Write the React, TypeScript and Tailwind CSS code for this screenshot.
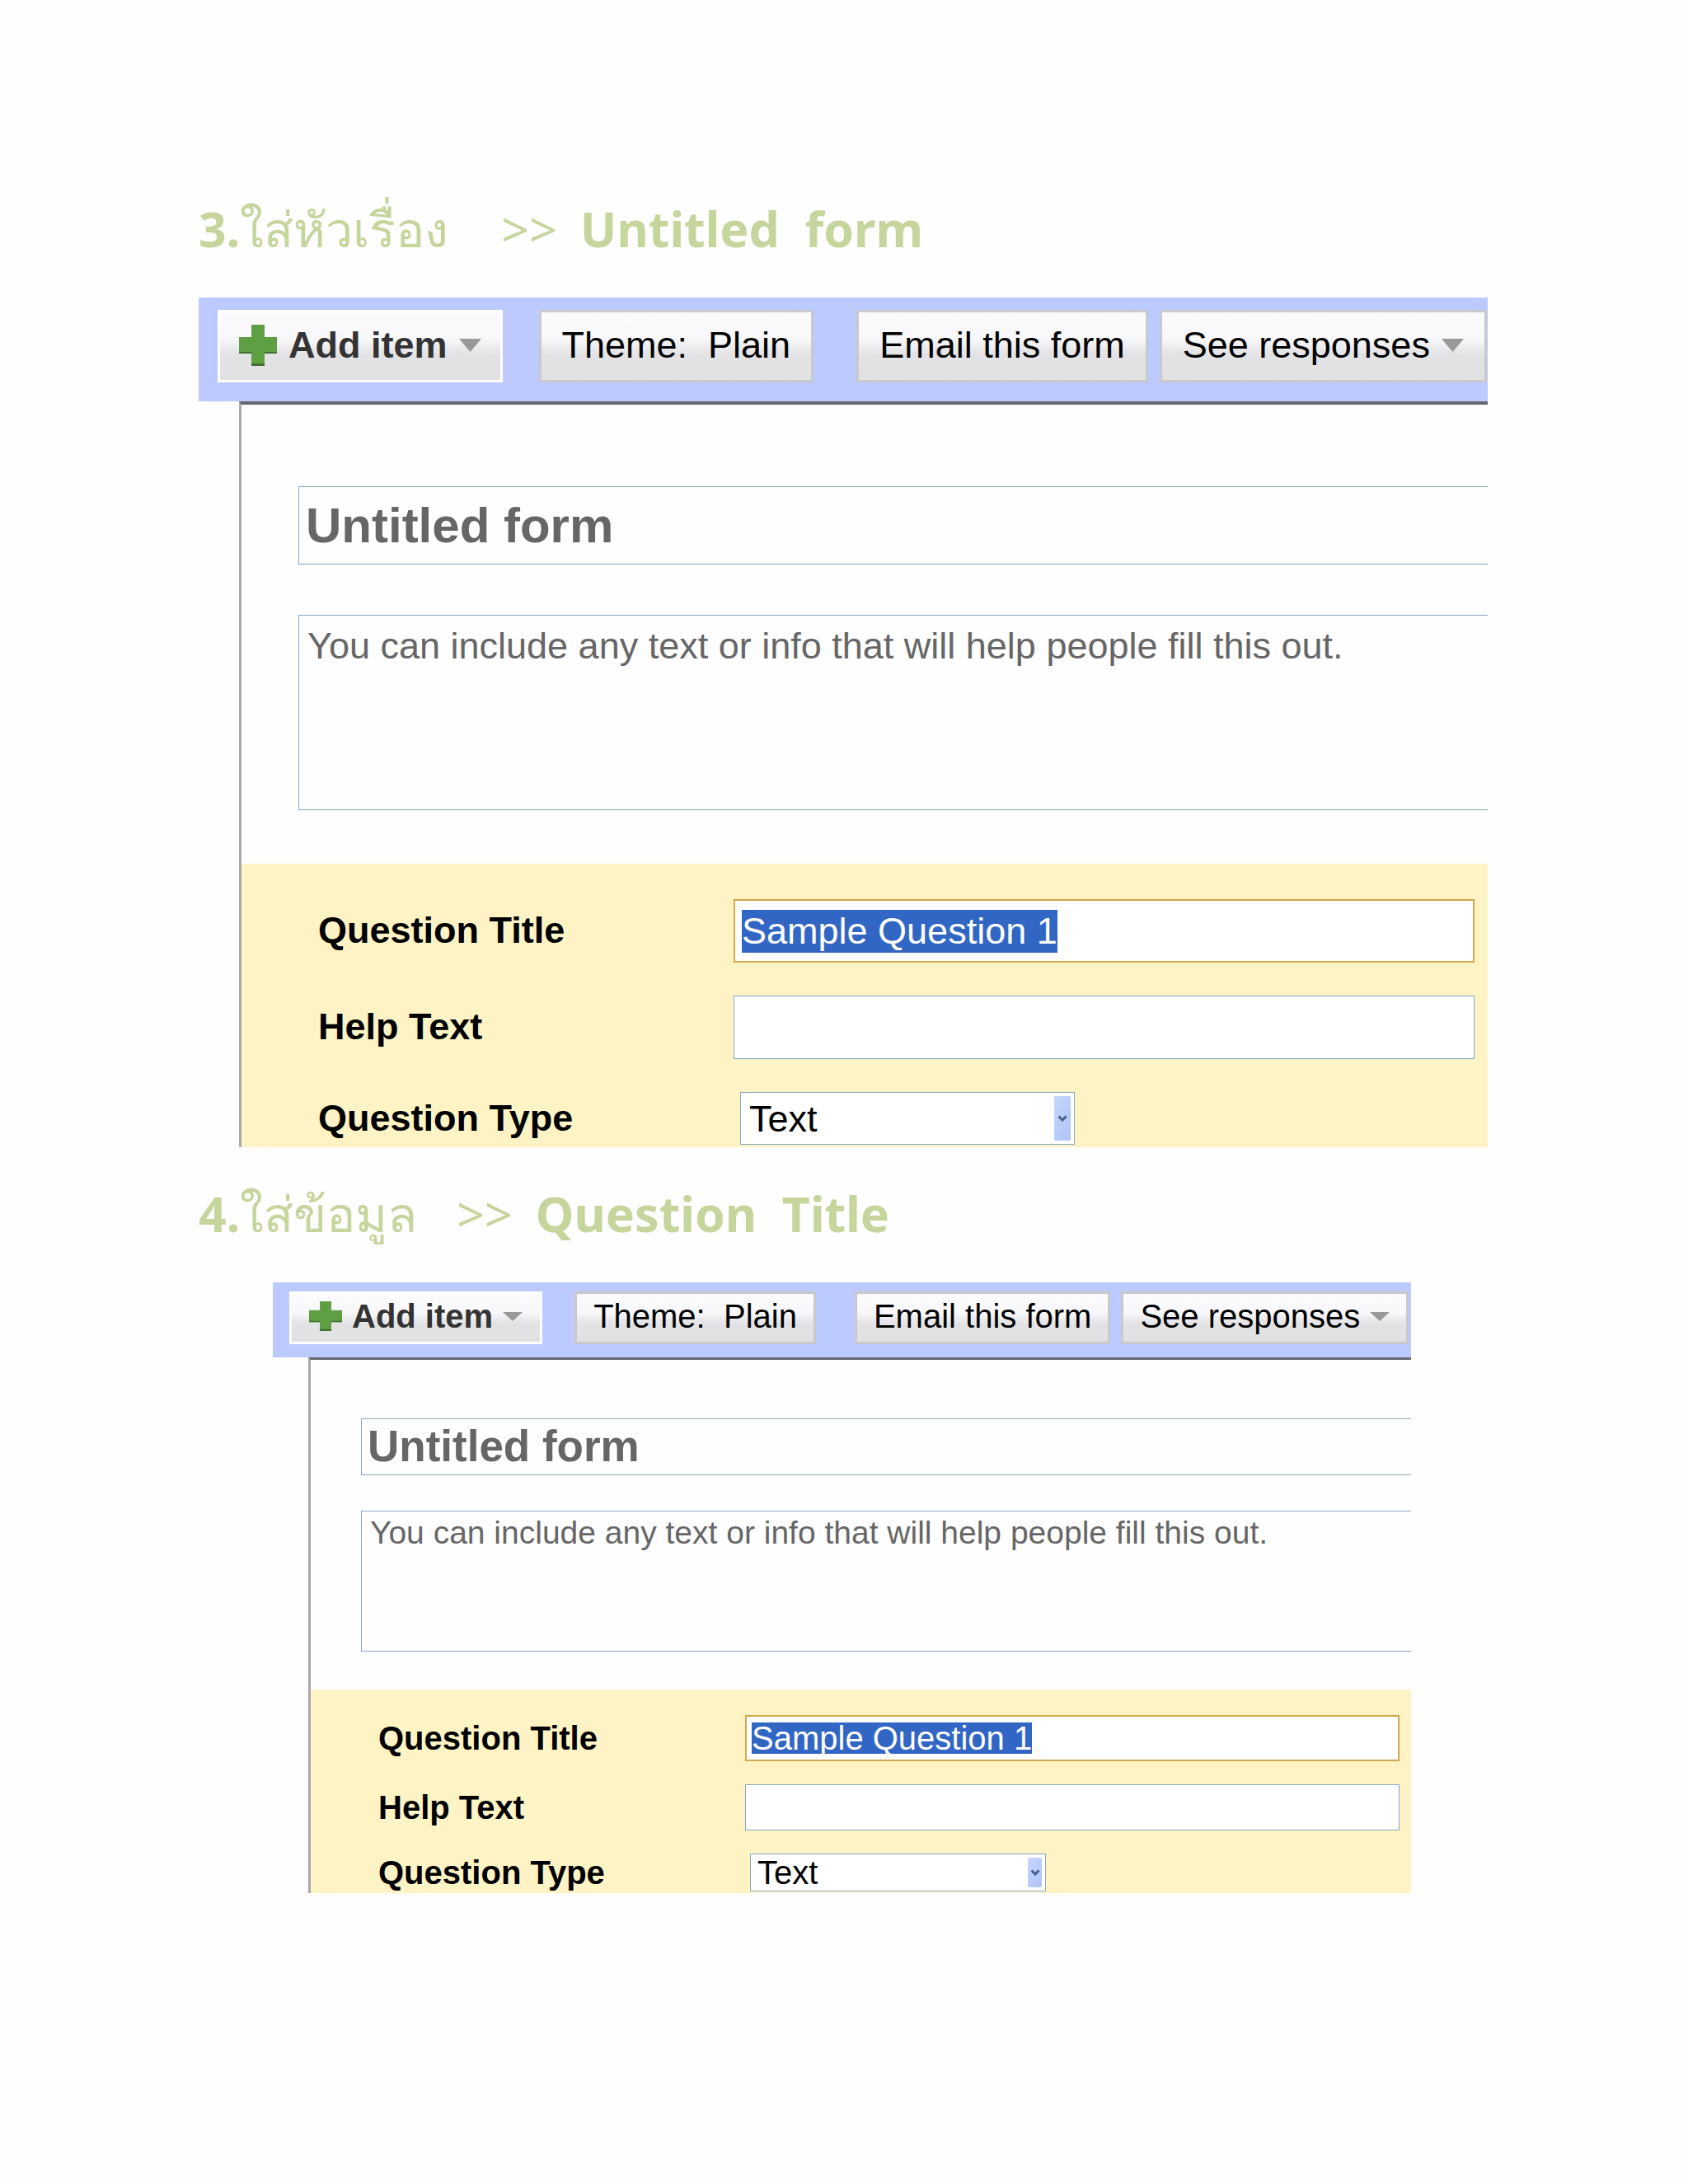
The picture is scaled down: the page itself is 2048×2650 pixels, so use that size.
import { useId } from "react";
import clsx from "clsx";

type Size = "lg" | "sm";

// every measurement that differs between the large and the small form
const S = {
  lg: {
    bar: "h-[126px] pl-[23px] pr-px pt-[15px]",
    btn: "h-[88px] text-[45px] pb-[3px]",
    pad: "px-[25px]",
    addPad: "px-[23px]",
    plus: "w-[46px] h-[50px]",
    caret: "w-[27px] h-4",
    iconGap: "gap-[14px]",
    g1: "ml-[44px]", g2: "ml-[52px]", g3: "ml-[14px]",
    body: "ml-[49px] border-t-4",
    top: "pl-[69px] pt-[99px] pb-[65px] gap-[61px]",
    title: "h-[95px] pl-2 text-[60px]",
    desc: "h-[237px] pl-[10px] pt-[11px] text-[45px] leading-[52px]",
    question: "pl-[93px] pr-4 pt-[43px] pb-[3px] gap-10 text-[45px]",
    label: "w-[504px] pb-[2px]",
    field: "h-[77px]",
    fieldPad: "pl-2",
    sample: "h-[52px]",
    selectBox: "ml-2 w-[406px] h-16",
    select: "pl-[6px]",
    strip: "w-5",
  },
  sm: {
    bar: "h-[91px] pl-[20px] pr-[3px] pt-[11px]",
    btn: "h-16 text-[40px] pb-1",
    pad: "px-5",
    addPad: "px-[21px]",
    plus: "w-10 h-9",
    caret: "w-6 h-[11px]",
    iconGap: "gap-3",
    g1: "ml-[39px]", g2: "ml-[47px]", g3: "ml-[13px]",
    body: "ml-[43px] border-t-3",
    top: "pl-[61px] pt-[71px] pb-[46px] gap-[43px]",
    title: "h-[69px] pl-[7px] pb-[2px] text-[53px]",
    desc: "h-[171px] pl-[10px] pt-1 text-[39px] leading-[44px]",
    question: "pl-[82px] pr-[14px] pt-[31px] pb-[2px] gap-7 text-[40px]",
    label: "w-[445px] pb-px",
    field: "h-14",
    fieldPad: "pl-[6px]",
    sample: "h-[38px]",
    selectBox: "ml-[6px] w-[359px] h-[46px]",
    select: "pl-1",
    strip: "w-[17px]",
  },
};

const face = "bg-[linear-gradient(#fbfbfd_0%,#f8f8fa_40%,#ececee_52%,#e3e3e5_62%,#e1e1e3_100%)]";

function Plus({ className }: { className: string }) {
  return (
    <svg viewBox="0 0 46 50" preserveAspectRatio="none" className={className} aria-hidden="true">
      <path d="M15 0H31V15H46V35H31V50H15V35H0V15H15Z" fill="#5f9f43" />
      <path d="M0 33H15V35H0ZM31 33H46V35H31ZM15 47H31V50H15Z" fill="#3f7032" />
    </svg>
  );
}

function Caret({ className }: { className: string }) {
  return (
    <svg viewBox="0 0 27 16" preserveAspectRatio="none" className={className} aria-hidden="true">
      <path d="M0 0H27L13.500 16Z" fill="#999" />
    </svg>
  );
}

function Toolbar({ size }: { size: Size }) {
  const s = S[size];
  const btn = clsx("flex shrink-0 items-center whitespace-pre border-3 leading-none", face, s.btn);
  const plain = clsx(btn, s.pad, "border-[#c9c9cb] text-black");
  return (
    <div className={clsx("flex items-start bg-[#bccaff]", s.bar)}>
      <button type="button" className={clsx(btn, s.addPad, s.iconGap, "border-white font-bold text-[#333]")}>
        <Plus className={s.plus} />
        Add item
        <Caret className={s.caret} />
      </button>
      <button type="button" className={clsx(plain, s.g1)}>{"Theme:  Plain"}</button>
      <button type="button" className={clsx(plain, s.g2)}>Email this form</button>
      <button type="button" className={clsx(plain, s.g3, s.iconGap)}>
        See responses
        <Caret className={s.caret} />
      </button>
    </div>
  );
}

function FormEditor({ size }: { size: Size }) {
  const id = useId();
  const s = S[size];
  const label = clsx("shrink-0 font-bold leading-none text-black", s.label);
  return (
    <section className="overflow-hidden font-['Liberation_Sans',sans-serif]">
      <Toolbar size={size} />
      <div className={clsx("border-l-3 border-t-[#666870] border-l-[#a9a9ad]", s.body)}>
        <div className={clsx("flex flex-col", s.top)}>
          <input
            aria-label="Form title"
            defaultValue="Untitled form"
            className={clsx("w-full border border-r-0 border-[#8aa7c4] font-bold text-[#666] outline-none", s.title)}
          />
          <textarea
            aria-label="Form description"
            defaultValue="You can include any text or info that will help people fill this out."
            className={clsx("block w-full resize-none overflow-hidden border border-r-0 border-[#8aa7c4] text-[#666] outline-none", s.desc)}
          />
        </div>
        <div className={clsx("flex flex-col bg-[#fdf3c4]", s.question)}>
          <div className="flex items-center">
            <label htmlFor={`${id}-title`} className={label}>Question Title</label>
            <div className={clsx("flex min-w-0 flex-1 items-center border-2 border-[#d0a850] bg-white", s.field, s.fieldPad)}>
              <input
                id={`${id}-title`}
                defaultValue="Sample Question 1"
                className={clsx("field-sizing-content bg-[#3166c4] text-white outline-none", s.sample)}
              />
            </div>
          </div>
          <div className="flex items-center">
            <label htmlFor={`${id}-help`} className={label}>Help Text</label>
            <input
              id={`${id}-help`}
              className={clsx("min-w-0 flex-1 border border-[#8aa7c4] bg-white outline-none", s.field, s.fieldPad)}
            />
          </div>
          <div className="flex items-center">
            <label htmlFor={`${id}-type`} className={label}>Question Type</label>
            <div className={clsx("flex border border-[#8aa7c4] bg-white p-1", s.selectBox)}>
              <select
                id={`${id}-type`}
                className={clsx("-my-1 min-w-0 flex-1 appearance-none leading-none text-black outline-none", s.select)}
              >
                <option>Text</option>
              </select>
              <div className={clsx("flex items-center justify-center rounded-xs bg-linear-to-br from-[#c6d6fd] to-[#aec4f6]", s.strip)}>
                <svg viewBox="0 0 12 8" className="w-3" fill="none" stroke="#44608c" strokeWidth="3" aria-hidden="true">
                  <path d="M1.500 1.500L6 6L10.500 1.500" />
                </svg>
              </div>
            </div>
          </div>
        </div>
      </div>
    </section>
  );
}

function Heading({ no, thai, latin, gap }: { no: string; thai: string; latin: string; gap: string }) {
  return (
    <h2 className="flex h-20 items-baseline whitespace-pre font-['Noto_Sans',sans-serif] text-[59px] leading-20 text-[#c5d59c]">
      <span className="font-bold">{no}</span>
      <span className="font-normal">{thai}</span>
      <span className={clsx("font-normal", gap)}>&gt;&gt;</span>
      <span className="ml-7 font-bold">{latin}</span>
    </h2>
  );
}

export default function App() {
  return (
    <main className="min-h-screen bg-[#fefefe] pt-[237px] pr-[243px] pb-[352px] pl-[241px]">
      <Heading no="3." thai="ใส่หัวเรื่อง" latin={"Untitled  form"} gap="ml-16" />
      <div className="mt-[44px]">
        <FormEditor size="lg" />
      </div>
      <div className="mt-10">
        <Heading no="4." thai="ใส่ข้อมูล" latin={"Question  Title"} gap="ml-12" />
      </div>
      <div className="mt-[44px] mr-[93px] ml-[90px]">
        <FormEditor size="sm" />
      </div>
    </main>
  );
}
